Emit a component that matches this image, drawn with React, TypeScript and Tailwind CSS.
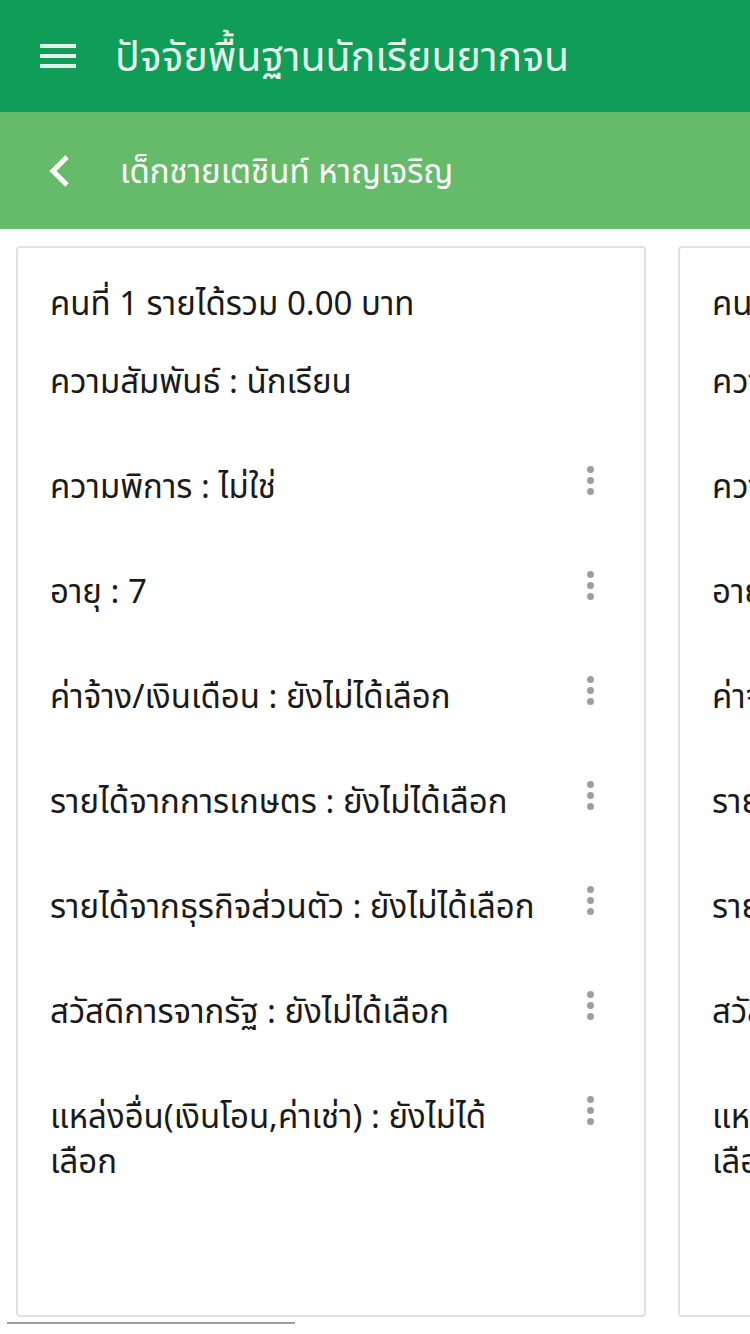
import React from 'react';

const rows = [
  { label: 'ความสัมพันธ์ : นักเรียน', menu: false },
  { label: 'ความพิการ : ไม่ใช่', menu: true },
  { label: 'อายุ : 7', menu: true },
  { label: 'ค่าจ้าง/เงินเดือน : ยังไม่ได้เลือก', menu: true },
  { label: 'รายได้จากการเกษตร : ยังไม่ได้เลือก', menu: true },
  { label: 'รายได้จากธุรกิจส่วนตัว : ยังไม่ได้เลือก', menu: true },
  { label: 'สวัสดิการจากรัฐ : ยังไม่ได้เลือก', menu: true },
  { label: 'แหล่งอื่น(เงินโอน,ค่าเช่า) : ยังไม่ได้เลือก', menu: true },
];

const MoreDots: React.FC = () => (
  <div className="flex flex-col items-center gap-[4px]">
    <span className="w-[7px] h-[7px] rounded-full bg-[#9e9e9e]" />
    <span className="w-[7px] h-[7px] rounded-full bg-[#9e9e9e]" />
    <span className="w-[7px] h-[7px] rounded-full bg-[#9e9e9e]" />
  </div>
);

const MemberCard: React.FC = () => (
  <div className="shrink-0 w-[630px] h-[1071px] border-2 border-[#e0e0e0] rounded-[4px] bg-white pl-[32px] pt-[35px]">
    <div className="h-[40px] leading-[40px] text-[33px] text-[#1a1a1a] whitespace-nowrap">คนที่ 1 รายได้รวม 0.00 บาท</div>
    <div className="mt-[5px]">
      {rows.map((row, i) => (
        <div key={i} className="flex items-start min-h-[105px] pt-[30px]">
          <div className="w-[495px] text-[33px] leading-[45px] text-[#1a1a1a]">{row.label}</div>
          <div className="ml-auto w-[48px] mr-[30px] flex justify-center pt-[3px]">
            {row.menu && <MoreDots />}
          </div>
        </div>
      ))}
    </div>
  </div>
);

export default function App() {
  return (
    <div className="w-[750px] h-[1334px] overflow-hidden bg-white" style={{ fontFamily: '"Noto Sans", "Noto Sans Thai", "DejaVu Sans", sans-serif' }}>
      {/* top app bar */}
      <div className="h-[112px] bg-[#0f9d58] flex items-center pl-[40px]">
        <div className="flex flex-col gap-[6px] w-[36px]">
          <span className="h-[4px] bg-[#e0f2ea]" />
          <span className="h-[4px] bg-[#e0f2ea]" />
          <span className="h-[4px] bg-[#e0f2ea]" />
        </div>
        <h1 className="ml-[39px] text-[41px] text-[#e4f4ec] font-normal whitespace-nowrap">ปัจจัยพื้นฐานนักเรียนยากจน</h1>
      </div>

      {/* sub bar */}
      <div className="h-[117px] bg-[#66bb6a] flex items-center pl-[47px]">
        <svg width="26" height="34" viewBox="0 0 26 34" fill="none">
          <path d="M20 3 L6 17 L20 31" stroke="#ffffff" strokeWidth="5" />
        </svg>
        <span className="ml-[47px] text-[33px] text-white whitespace-nowrap">เด็กชายเตชินท์ หาญเจริญ</span>
      </div>

      {/* cards */}
      <div className="pt-[17px] pl-[16px] flex gap-[32px] overflow-hidden">
        <MemberCard />
        <MemberCard />
      </div>
      <div className="mt-[5px] ml-[7px] w-[288px] h-[2px] bg-[#a0a0a0]" />
    </div>
  );
}
